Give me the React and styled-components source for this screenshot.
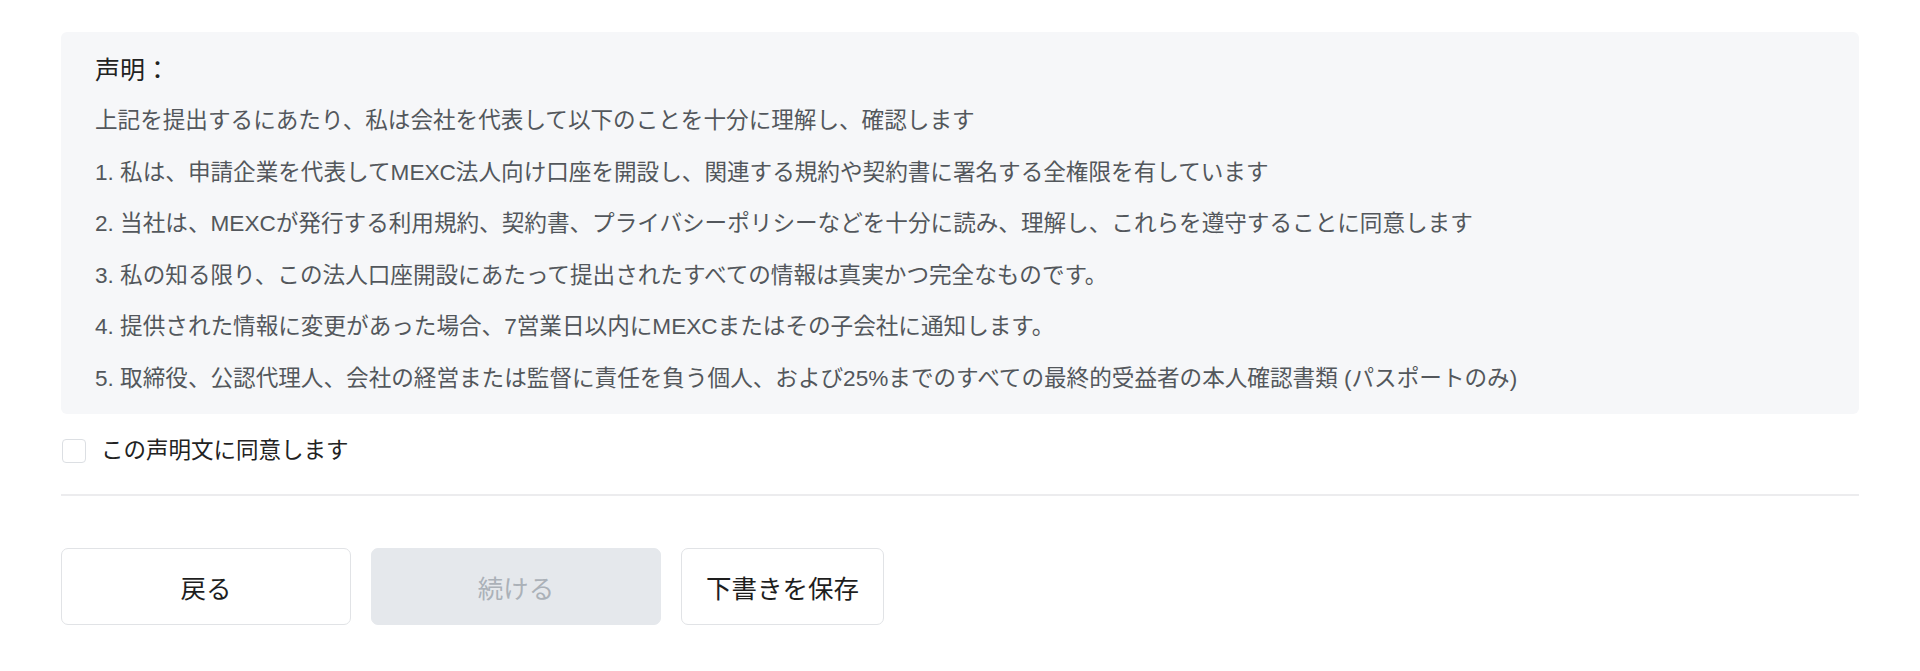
import React, { useState } from "react";
import styled, { createGlobalStyle } from "styled-components";

const GlobalStyles = createGlobalStyle`
  html, body {
    margin: 0;
    padding: 0;
    background: #ffffff;
  }
  body {
    font-family: "Liberation Sans", "Noto Sans CJK JP", sans-serif;
    -webkit-font-smoothing: antialiased;
  }
`;

const statements = [
  "上記を提出するにあたり、私は会社を代表して以下のことを十分に理解し、確認します",
  "1. 私は、申請企業を代表してMEXC法人向け口座を開設し、関連する規約や契約書に署名する全権限を有しています",
  "2. 当社は、MEXCが発行する利用規約、契約書、プライバシーポリシーなどを十分に読み、理解し、これらを遵守することに同意します",
  "3. 私の知る限り、この法人口座開設にあたって提出されたすべての情報は真実かつ完全なものです。",
  "4. 提供された情報に変更があった場合、7営業日以内にMEXCまたはその子会社に通知します。",
  "5. 取締役、公認代理人、会社の経営または監督に責任を負う個人、および25%までのすべての最終的受益者の本人確認書類 (パスポートのみ)",
];

const App = () => {
  const [agreed, setAgreed] = useState(false);

  return (
    <>
      <GlobalStyles />
      <Page>
        <Statement>
          <Title>声明：</Title>
          {statements.map((line) => (
            <Line key={line}>{line}</Line>
          ))}
        </Statement>

        <AgreeRow>
          <Box type="checkbox" checked={agreed} onChange={() => setAgreed(!agreed)} />
          <span>この声明文に同意します</span>
        </AgreeRow>

        <Divider />

        <Actions>
          <Button $width="290px">戻る</Button>
          <Button $width="290px" disabled={!agreed}>
            続ける
          </Button>
          <Button>下書きを保存</Button>
        </Actions>
      </Page>
    </>
  );
};

export default App;

const Page = styled.div`
  padding: 32px 61px 40px;
`;

const Statement = styled.div`
  display: flex;
  flex-direction: column;
  gap: 17.6px;
  padding: 20.5px 34px 18px;
  background: #f6f7f9;
  border-radius: 6px;
`;

const Title = styled.div`
  font-size: 25px;
  line-height: 34px;
  color: #222222;
`;

const Line = styled.div`
  font-size: 22.6px;
  line-height: 34px;
  color: #53575c;
  white-space: nowrap;
`;

const AgreeRow = styled.label`
  display: flex;
  align-items: center;
  gap: 15px;
  margin-top: 20px;
  font-size: 22.5px;
  line-height: 34px;
  color: #222222;
  cursor: pointer;
`;

const Box = styled.input`
  appearance: none;
  margin: 0 0 0 1px;
  width: 24px;
  height: 24px;
  border: 1.5px solid #dcdfe3;
  border-radius: 4px;
  background: #ffffff;
  box-sizing: border-box;
  cursor: pointer;

  &:checked {
    background: #1c6cf2;
    border-color: #1c6cf2;
  }
`;

const Divider = styled.div`
  height: 2px;
  background: #ececee;
  margin-top: 26px;
`;

const Actions = styled.div`
  display: flex;
  gap: 20px;
  margin-top: 52px;
`;

const Button = styled.button`
  width: ${(props) => props.$width || "auto"};
  height: 77px;
  padding: 0 24px;
  box-sizing: border-box;
  border: 1.5px solid #e1e3e6;
  border-radius: 7px;
  background: #ffffff;
  font-family: "Liberation Sans", "Noto Sans CJK JP", sans-serif;
  font-size: 25.5px;
  color: #1e1e1e;
  cursor: pointer;

  &:disabled {
    background: #e5e8ec;
    border-color: #e5e8ec;
    color: #abb1b8;
    cursor: not-allowed;
  }
`;
